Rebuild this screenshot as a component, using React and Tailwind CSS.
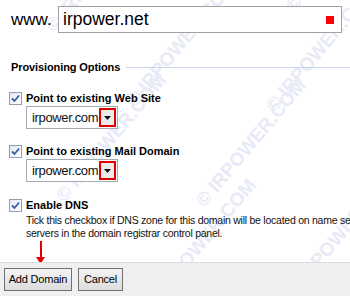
import React from 'react'

const font = { fontFamily: '"Liberation Sans", Tahoma, "DejaVu Sans", sans-serif' }

function Check() {
  return (
    <span className="flex h-[13px] w-[13px] shrink-0 items-center justify-center border border-[#8f9fb7] bg-gradient-to-br from-[#e4e8f0] to-white">
      <svg width="9" height="9" viewBox="0 0 9 9">
        <path d="M1 4.5 L3.5 7 L8 1.5" fill="none" stroke="#3c5aa8" strokeWidth="1.8" />
      </svg>
    </span>
  )
}

function DomainSelect() {
  return (
    <div className="ml-[26px] mt-[1px] flex h-[23px] w-[92px] items-center border border-[#a5acb5] bg-white pl-[5px]">
      <span className="text-[13px] leading-none tracking-[-0.35px] text-[#111]">irpower.com</span>
      <span className="ml-auto mr-[1px] flex h-[19px] w-[17px] items-center justify-center border-2 border-[#e00000] bg-[#ebebeb]">
        <svg width="7" height="4" viewBox="0 0 7 4">
          <path d="M0 0 H7 L3.5 4 Z" fill="#111" />
        </svg>
      </span>
    </div>
  )
}

const marks = [
  [50, 15], [290, -5],
  [130, 90], [270, 95],
  [60, 185], [200, 190],
  [150, 290], [290, 280],
]

export default function App() {
  return (
    <div className="relative h-[296px] w-[350px] overflow-hidden bg-white text-[#000]" style={font}>
      <div className="pointer-events-none absolute inset-0">
        {marks.map(([x, y], i) => (
          <span
            key={i}
            className="absolute origin-left -rotate-[50deg] whitespace-nowrap text-[19px] font-bold text-[#e8eaf7]"
            style={{ left: x, top: y }}
          >
            © IRPOWER.COM
          </span>
        ))}
      </div>

      <div className="relative">
        <div className="flex items-center pl-[11px] pt-[6px]">
          <span className="w-[47px] text-[17px] leading-none">www.</span>
          <div className="flex h-[27px] w-[284px] items-center border border-[#a0a0a0] bg-white pl-[4px] pr-[7px]">
            <span className="text-[17.5px] leading-none">irpower.net</span>
            <span className="ml-auto h-[8px] w-[8px] bg-[#ff0000]" />
          </div>
        </div>

        <div className="mt-[15px] pb-[16px]">
          <div className="flex items-center gap-[6px] pl-[11px] pt-[14px]">
            <span className="text-[11px] font-bold leading-none tracking-[-0.1px]">Provisioning Options</span>
            <span className="h-px flex-1 bg-[#c9d5e8]" />
          </div>

          <div className="mt-[19px] flex items-center gap-[4px] pl-[9px]">
            <Check />
            <span className="text-[11px] font-bold leading-none">Point to existing Web Site</span>
          </div>
          <DomainSelect />

          <div className="mt-[16px] flex items-center gap-[4px] pl-[9px]">
            <Check />
            <span className="text-[11px] font-bold leading-none">Point to existing Mail Domain</span>
          </div>
          <DomainSelect />

          <div className="mt-[17px] flex items-center gap-[4px] pl-[9px]">
            <Check />
            <span className="text-[11px] font-bold leading-none">Enable DNS</span>
          </div>
          <div className="mt-[2px] whitespace-nowrap pl-[26px] text-[10.5px] leading-[13px] tracking-[-0.25px] text-[#111]">
            <div>Tick this checkbox if DNS zone for this domain will be located on name servers</div>
            <div>servers in the domain registrar control panel.</div>
          </div>
        </div>
      </div>

      <div className="absolute left-[36px] top-[241px] flex flex-col items-center">
        <span className="h-[17px] w-[2px] bg-[#e00000]" />
        <svg width="9" height="7" viewBox="0 0 9 7" className="-mt-px">
          <path d="M0 0 H9 L4.5 7 Z" fill="#e00000" />
        </svg>
      </div>

      <div className="absolute bottom-0 left-0 right-0 flex h-[34px] items-center gap-[6px] border-t border-[#dcdcdc] bg-[#f0f0f0] pl-[4px]">
        <button className="h-[23px] w-[68px] border border-[#707070] bg-gradient-to-b from-[#f4f4f4] to-[#dcdcdc] text-[11px] leading-none tracking-[-0.2px]">Add Domain</button>
        <button className="h-[23px] w-[45px] border border-[#707070] bg-gradient-to-b from-[#f4f4f4] to-[#dcdcdc] text-[11px] leading-none tracking-[-0.2px]">Cancel</button>
      </div>
    </div>
  )
}
